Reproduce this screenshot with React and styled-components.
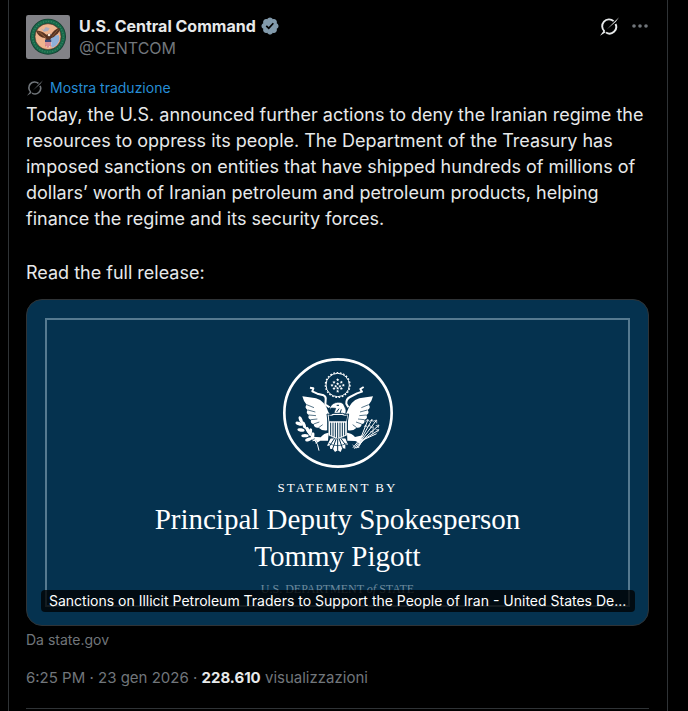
import React, { useId } from 'react'
import styled, { createGlobalStyle } from 'styled-components'

const GlobalStyle = createGlobalStyle`
    * {
        box-sizing: border-box;
    }
    body {
        margin: 0;
        background: #000;
        color: #e7e9ea;
        font-family: Inter, "Liberation Sans", sans-serif;
    }
    p {
        margin: 0;
    }
`

const Column = styled.main`
    min-height: 100vh;
    margin: 0 20px 0 8px;
    padding: 15px 18px 0 17px;
    border: solid #2f3336;
    border-width: 0 1px;
`

const Header = styled.header`
    display: flex;
    align-items: flex-start;
    height: 44px;
    gap: 9px;
`

const Names = styled.div`
    flex: 1;
    min-width: 0;
    font-size: 16px;
    line-height: 22px;
`

const NameLink = styled.a`
    display: flex;
    align-items: center;
    gap: 4px;
    color: #e7e9ea;
    font-weight: 700;
    text-decoration: none;
`

const Handle = styled.a`
    color: #71767b;
    text-decoration: none;
`

const Actions = styled.div`
    display: flex;
    align-items: center;
    gap: 12px;
`

const IconButton = styled.button`
    display: flex;
    padding: 0;
    border: 0;
    background: none;
    color: ${props => props.$color};
    cursor: pointer;
`

const Translate = styled.button`
    display: flex;
    align-items: center;
    gap: 7px;
    margin-top: 19px;
    padding: 0 0 0 1px;
    border: 0;
    background: none;
    color: #268ed6;
    font: inherit;
    font-size: 14px;
    line-height: 20px;
    cursor: pointer;

    svg {
        color: #71767b;
    }
`

const Body = styled.div`
    display: flex;
    flex-direction: column;
    gap: 28px;
    margin-top: 4px;
    font-size: 18px;
    line-height: 26px;
`

const Card = styled.a`
    position: relative;
    display: block;
    margin-top: 13px;
    padding: 18px;
    border: 1px solid #2f3336;
    border-radius: 16px;
    background: #05324f;
    color: #fff;
    text-decoration: none;
`

const Frame = styled.div`
    display: flex;
    flex-direction: column;
    align-items: center;
    padding: 37px 0 8px;
    border: 2px solid #567a90;
    font-family: "Liberation Serif", serif;
    text-align: center;
`

const Kicker = styled.div`
    margin-top: 10px;
    font-size: 13px;
    line-height: 18px;
    letter-spacing: 2px;
`

const Speaker = styled.div`
    margin-top: 4px;
    font-size: 29px;
    line-height: 37px;
`

const Department = styled.div`
    margin-top: 6px;
    color: #6d8a9d;
    font-size: 12px;
    line-height: 16px;
`

const Caption = styled.div`
    position: absolute;
    right: 13px;
    bottom: 13px;
    left: 14px;
    padding: 0 8px;
    border-radius: 4px;
    background: rgba(0, 0, 0, 0.77);
    font-size: 14px;
    line-height: 22px;
    overflow: hidden;
    white-space: nowrap;
    text-overflow: ellipsis;
`

const Source = styled.a`
    display: block;
    margin-top: 4px;
    color: #71767b;
    font-size: 14px;
    line-height: 20px;
    text-decoration: none;
`

const Meta = styled.div`
    margin-top: 16px;
    padding-bottom: 18px;
    border-bottom: 1px solid #2f3336;
    color: #71767b;
    font-size: 15px;
    line-height: 24px;

    strong {
        color: #e7e9ea;
    }
`

const GrokIcon = ({ size }) => (
    <svg width={size} height={size} viewBox="0 0 60 60" aria-hidden="true">
        <g fill="none" stroke="currentColor" strokeWidth="6">
            <path d="M14 45 A21 21 0 0 1 43 13" />
            <path d="M49 22 A21 21 0 0 1 19 49" />
        </g>
        <path d="M60 1 L50 15 L22 39 L43 17 Z M0 59 L12 43 L18 48 Z" fill="currentColor" />
    </svg>
)

const DotsIcon = () => (
    <svg width="18" height="22" viewBox="0 0 18 22" fill="currentColor" aria-hidden="true">
        <circle cx="3" cy="11" r="1.8" />
        <circle cx="9" cy="11" r="1.8" />
        <circle cx="15" cy="11" r="1.8" />
    </svg>
)

const VerifiedIcon = () => (
    <svg width="20" height="20" viewBox="0 0 24 24" fill="#829aab" aria-label="Account verificato">
        <path d="M22.25 12c0-1.43-.88-2.67-2.19-3.34.46-1.39.2-2.9-.81-3.91s-2.52-1.27-3.91-.81c-.66-1.31-1.91-2.19-3.34-2.19s-2.67.88-3.33 2.19c-1.4-.46-2.91-.2-3.92.81s-1.26 2.52-.8 3.91c-1.31.67-2.2 1.91-2.2 3.34s.89 2.67 2.2 3.34c-.46 1.39-.21 2.9.8 3.91s2.52 1.26 3.91.81c.67 1.31 1.91 2.19 3.34 2.19s2.68-.88 3.34-2.19c1.39.45 2.9.2 3.91-.81s1.27-2.52.81-3.91c1.31-.67 2.19-1.91 2.19-3.34zm-11.71 4.2L6.8 12.46l1.41-1.42 2.26 2.26 4.8-5.23 1.47 1.36-6.2 6.77z" />
    </svg>
)

const Avatar = () => (
    <svg width="44" height="44" viewBox="0 0 132 132" aria-hidden="true">
        <rect width="132" height="132" rx="7" fill="#828287" />
        <circle cx="66" cy="65" r="54" fill="#173f31" />
        <circle cx="66" cy="65" r="46" fill="none" stroke="#16694a" strokeWidth="11" />
        <circle cx="66" cy="65" r="46" fill="none" stroke="#3d8563" strokeWidth="4" strokeDasharray="3 5" />
        <circle cx="66" cy="65" r="39" fill="#efb58f" stroke="#503c2d" strokeWidth="2" />
        <path d="M70 55 L84 62 L98 60 Q105 78 87 94 L78 98 L72 82 Z" fill="#8fb0d8" />
        <path d="M44 40 l9 5 l6 -9 l12 4 l-5 8 l-12 2 Z" fill="#a9adbd" />
        <path d="M29 46 Q46 47 61 59 L68 56 L75 59 Q84 43 101 38 Q103 51 89 61 Q83 69 75 70 L70 80 L60 78 L58 69 Q38 69 29 46 Z" fill="#573321" />
        <path d="M35 50 L56 65 M43 51 L61 70 M97 43 L78 65" stroke="#9b6840" strokeWidth="2" />
        <circle cx="69" cy="60" r="4" fill="#f2e7db" />
        <path d="M57 75 H76 V89 Q73 96 67 99 Q60 95 57 89 Z" fill="#f3e8e8" />
        <path d="M60 80 V94 M66 80 V98 M72 80 V94" stroke="#bd3045" strokeWidth="3" />
        <path d="M57 74 H76 V81 H57 Z" fill="#354777" />
    </svg>
)

// left wing, the right one is the same path mirrored
const WING = 'M81 137 Q103 140 122 143 Q149 151 159 184 L165 194 L156 203 V239 Q139 241 130 231 Q116 233 115 220 Q104 219 107 207 Q95 204 101 193 Q90 188 97 178 Q86 170 94 162 Q84 151 81 137 Z'
const FEATHERS = 'M98 178 L120 184 M101 193 L122 195 M107 207 L126 205 M115 220 L132 214 M130 231 L142 222 M94 162 L116 171'

const STARS = [
    [187, 87], [176, 94], [198, 94], [187, 99], [170, 103], [181, 106],
    [194, 106], [204, 103], [187, 112], [176, 113], [198, 113], [187, 121],
]

const LEAVES = [
    [76, 207, 70], [86, 223, 72], [98, 239, 66], [71, 219, 20], [77, 238, 12],
    [89, 255, 0], [105, 244, 100], [100, 266, -20], [112, 256, 100],
]

const Seal = () => {
    const clip = useId()
    return (
        <svg width="112" height="112" viewBox="20 19 336 336" fill="#fff" aria-hidden="true">
            <circle cx="188" cy="187" r="161" fill="none" stroke="#fff" strokeWidth="8" />
            <circle cx="187" cy="103" r="35" fill="none" stroke="#fff" strokeWidth="3" />
            <circle cx="187" cy="103" r="37" fill="none" stroke="#fff" strokeWidth="4" strokeDasharray="5 5" />
            {STARS.map(([x, y]) => (
                <path key={`${x}-${y}`} d={`M${x} ${y - 4} l2 3 h3 l-3 3 l1 3 l-3 -2 l-3 2 l1 -3 l-3 -3 h3 Z`} />
            ))}
            <g fill="none" stroke="#fff" strokeWidth="6" strokeLinejoin="round">
                <path d="M104 111 L114 113 L111 122 L126 129 L145 134 Q153 138 151 148 L150 162 L163 170" />
                <path d="M265 109 L255 115 L260 123 L245 128 L224 139 Q212 145 213 159 L219 170" />
            </g>
            <path d={WING} />
            <path d={WING} transform="translate(374 0) scale(-1 1)" />
            <g fill="none" stroke="#05324f" strokeWidth="2">
                <path d={FEATHERS} />
                <path d={FEATHERS} transform="translate(374 0) scale(-1 1)" />
            </g>
            <path d="M164 170 Q171 156 187 155 Q203 153 207 166 Q215 178 211 190 H175 L181 173 L168 172 L164 177 Z" stroke="#05324f" strokeWidth="2" />
            <path d="M184 164 H191 M184 184 L191 174 M194 188 L198 176" stroke="#05324f" strokeWidth="3" />
            <path d="M155 190 Q167 194 173 188 H202 Q209 194 220 190 L216 214 V255 Q204 260 187 268 Q170 260 158 255 V214 Z" stroke="#05324f" strokeWidth="3" />
            <path d="M160 194 Q169 197 175 193 H200 Q209 197 216 194 L213 212 H162 Z" fill="#05324f" />
            <path d="M166 216 V254 M173 216 V257 M180 216 V260 M187 216 V263 M194 216 V260 M201 216 V257 M208 216 V254" stroke="#05324f" strokeWidth="3" />
            <path d="M160 246 Q146 247 136 260 L110 258 L119 265 L109 272 L124 270 L120 279 L135 270 L158 270 Z" />
            <path d="M215 246 Q229 247 239 259 L262 254 L257 264 L268 269 L253 270 L257 279 L240 271 L216 270 Z" />
            <clipPath id={clip}>
                <path d="M166 263 H210 L218 282 L210 281 L210 294 L201 292 L196 304 L187 299 L179 304 L173 295 L165 295 L163 285 L155 285 Z" />
            </clipPath>
            <g clipPath={`url(#${clip})`}>
                <path d="M150 260 H225 V310 H150 Z" />
                <path d="M180 260 L160 290 M184 260 L170 300 M187 260 V308 M190 260 L204 300 M194 260 L216 290" stroke="#05324f" strokeWidth="3" />
                <path d="M160 278 Q187 292 214 278" fill="none" stroke="#05324f" strokeWidth="2" />
            </g>
            <path d="M131 300 Q129 280 117 267 Q94 248 77 205" fill="none" stroke="#fff" strokeWidth="3" />
            {LEAVES.map(([x, y, angle]) => (
                <ellipse key={`${x}-${y}`} cx={x} cy={y} rx="11" ry="5" transform={`rotate(${angle} ${x} ${y})`} />
            ))}
            <g fill="none" stroke="#fff" strokeWidth="2">
                <path d="M233 291 L256 263 L278 207 M237 294 L258 264 L290 207 M243 293 L260 266 L303 209 M248 291 L263 267 L310 224 M251 284 L265 267 L310 238 M255 277 L265 267 L304 249" strokeWidth="3" />
                <path d="M270 212 L277 206 L282 213 M282 212 L290 206 L294 214 M294 211 L304 208 L304 218 M301 225 L311 223 L308 232 M301 237 L311 237 L306 245 M266 229 L271 223 L276 231 M277 229 L283 223 L286 231 M286 232 L294 228 L293 238 M284 244 L294 240 L291 249 M232 282 L239 291 L252 290" />
            </g>
        </svg>
    )
}

export default function App() {
    return (
        <>
            <GlobalStyle />
            <Column>
                <article>
                    <Header>
                        <Avatar />
                        <Names>
                            <NameLink href="#profile">
                                U.S. Central Command
                                <VerifiedIcon />
                            </NameLink>
                            <Handle href="#profile">@CENTCOM</Handle>
                        </Names>
                        <Actions>
                            <IconButton $color="#e7e9ea" aria-label="Grok">
                                <GrokIcon size={19} />
                            </IconButton>
                            <IconButton $color="#71767b" aria-label="Altro">
                                <DotsIcon />
                            </IconButton>
                        </Actions>
                    </Header>
                    <Translate>
                        <GrokIcon size={16} />
                        Mostra traduzione
                    </Translate>
                    <Body>
                        <p>
                            Today, the U.S. announced further actions to deny the Iranian regime the
                            resources to oppress its people. The Department of the Treasury has
                            imposed sanctions on entities that have shipped hundreds of millions of
                            dollars’ worth of Iranian petroleum and petroleum products, helping
                            finance the regime and its security forces.
                        </p>
                        <p>Read the full release:</p>
                    </Body>
                    <Card href="#release">
                        <Frame>
                            <Seal />
                            <Kicker>STATEMENT BY</Kicker>
                            <Speaker>
                                Principal Deputy Spokesperson
                                <br />
                                Tommy Pigott
                            </Speaker>
                            <Department>
                                U.S. DEPARTMENT <i>of</i> STATE
                            </Department>
                        </Frame>
                        <Caption>
                            Sanctions on Illicit Petroleum Traders to Support the People of Iran - United States De...
                        </Caption>
                    </Card>
                    <Source href="#release">Da state.gov</Source>
                    <Meta>
                        <time dateTime="2026-01-23T18:25">6:25 PM · 23 gen 2026</time> · <strong>228.610</strong> visualizzazioni
                    </Meta>
                </article>
            </Column>
        </>
    )
}
